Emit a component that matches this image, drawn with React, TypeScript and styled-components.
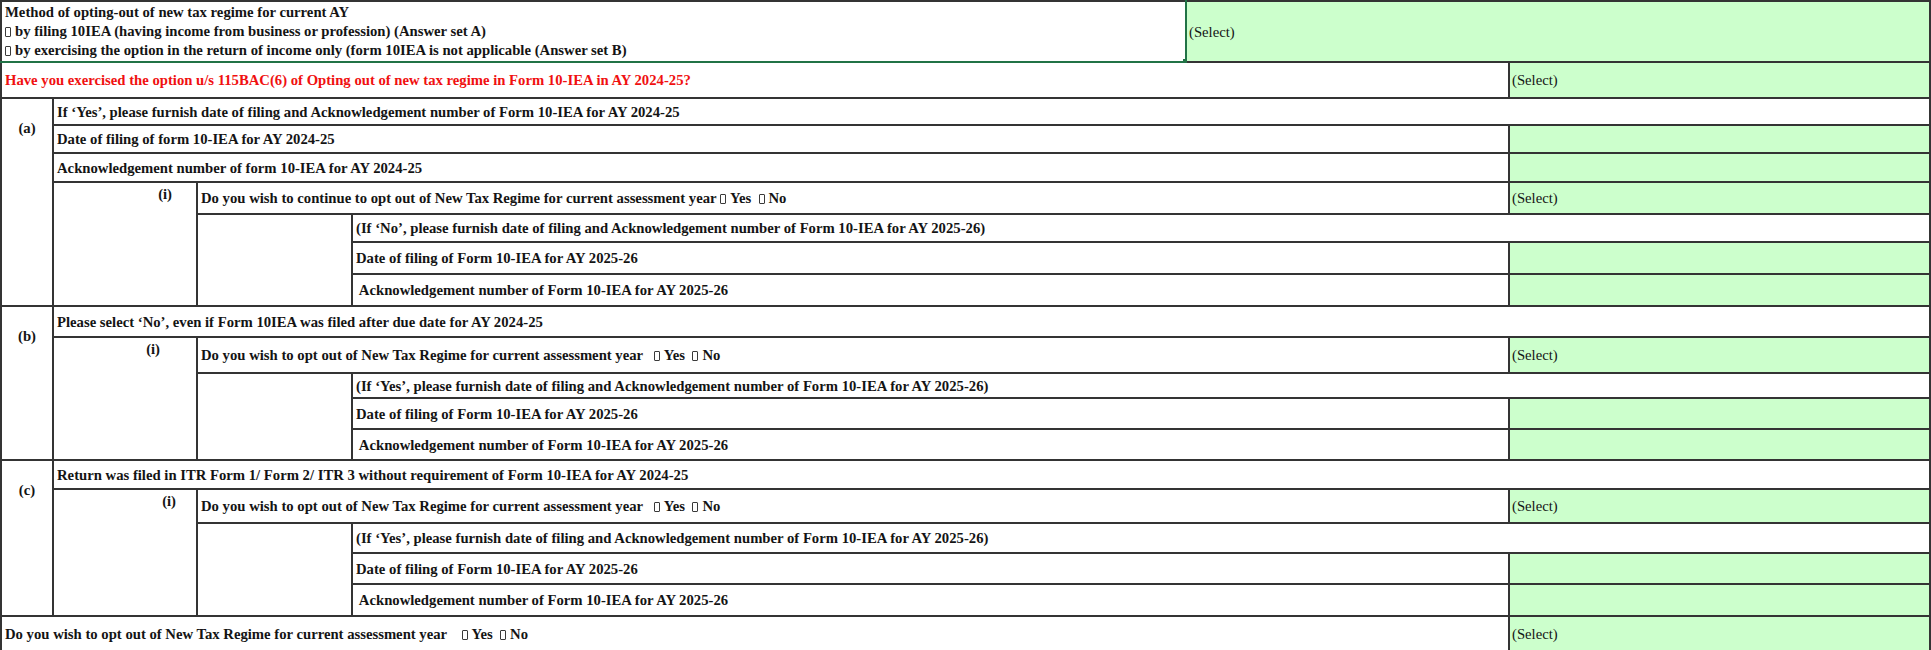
import React from "react";
import styled, { createGlobalStyle } from "styled-components";

const Global = createGlobalStyle`
  html, body { margin: 0; padding: 0; background: #ffffff; }
`;

const Sheet = styled.table`
  width: 1931px;
  border-collapse: collapse;
  table-layout: fixed;
  font-family: "Liberation Serif", "Times New Roman", serif;
  font-size: 14.7px;
  font-weight: bold;
  color: #141414;
  border: 2px solid #1a1a1a;
`;

const Row = styled.tr<{ $h: number }>`
  height: ${(p) => p.$h}px;
`;

const Cell = styled.td<{ $tone?: "red" }>`
  border: 2px solid #343434;
  padding: 0 3px;
  vertical-align: middle;
  white-space: pre;
  overflow: hidden;
  line-height: 16px;
  background: #ffffff;
  color: ${(p) => (p.$tone === "red" ? "#f01010" : "#141414")};
`;

const Select = styled(Cell)`
  background: #ccffcc;
  font-weight: normal;
  padding-left: 2px;
`;

const SelectedCell = styled(Cell)`
  position: relative;
  vertical-align: middle;
  line-height: 19px;
  border-right: 2px solid #217346;
  border-bottom: 2px solid #217346;
`;

const FillHandle = styled.span`
  position: absolute;
  right: -5px;
  bottom: -5px;
  width: 6px;
  height: 6px;
  background: #217346;
  border: 1px solid #ffffff;
  z-index: 2;
`;

const SectionLabel = styled(Cell)`
  vertical-align: top;
  text-align: center;
  padding: 21px 0 0;
`;

const ItemLabel = styled(Cell)<{ $pad: number }>`
  vertical-align: top;
  text-align: right;
  padding: 3px ${(p) => p.$pad}px 0 0;
`;

const Blank = styled(Cell)``;

const Box = styled.span`
  display: inline-block;
  width: 4px;
  height: 8px;
  border: 1px solid #3a3a3a;
  border-radius: 1px;
  vertical-align: -1px;
  margin-right: 4px;
`;

const Line = styled.div``;

const YesNo: React.FC<{ lead: string }> = ({ lead }) => (
  <>
    {lead}
    <Box />
    {"Yes  "}
    <Box />
    {"No"}
  </>
);

type BlockProps = {
  question: React.ReactNode;
  note: string;
  pad: number;
  heights: [number, number, number, number];
};

const OptOutBlock: React.FC<BlockProps> = ({ question, note, pad, heights }) => (
  <>
    <Row $h={heights[0]}>
      <ItemLabel rowSpan={4} $pad={pad}>
        (i)
      </ItemLabel>
      <Cell colSpan={3}>{question}</Cell>
      <Select>(Select)</Select>
    </Row>
    <Row $h={heights[1]}>
      <Blank rowSpan={3} />
      <Cell colSpan={3}>{note}</Cell>
    </Row>
    <Row $h={heights[2]}>
      <Cell colSpan={2}>Date of filing of Form 10-IEA for AY 2025-26</Cell>
      <Select />
    </Row>
    <Row $h={heights[3]}>
      <Cell colSpan={2}> Acknowledgement number of Form 10-IEA for AY 2025-26</Cell>
      <Select />
    </Row>
  </>
);

export default function App() {
  return (
    <>
      <Global />
      <Sheet>
        <colgroup>
          <col style={{ width: 52 }} />
          <col style={{ width: 144 }} />
          <col style={{ width: 155 }} />
          <col style={{ width: 834 }} />
          <col style={{ width: 323 }} />
          <col />
        </colgroup>
        <tbody>
          <Row $h={61}>
            <SelectedCell colSpan={4}>
              <Line>Method of opting-out of new tax regime for current AY</Line>
              <Line>
                <Box />
                by filing 10IEA (having income from business or profession) (Answer set A)
              </Line>
              <Line>
                <Box />
                by exercising the option in the return of income only (form 10IEA is not applicable (Answer set B)
              </Line>
              <FillHandle />
            </SelectedCell>
            <Select colSpan={2}>(Select)</Select>
          </Row>
          <Row $h={36}>
            <Cell colSpan={5} $tone="red">
              Have you exercised the option u/s 115BAC(6) of Opting out of new tax regime in Form 10-IEA in AY 2024-25?
            </Cell>
            <Select>(Select)</Select>
          </Row>

          <Row $h={27}>
            <SectionLabel rowSpan={7}>(a)</SectionLabel>
            <Cell colSpan={5}>
              If ‘Yes’, please furnish date of filing and Acknowledgement number of Form 10-IEA for AY 2024-25
            </Cell>
          </Row>
          <Row $h={28}>
            <Cell colSpan={4}>Date of filing of form 10-IEA for AY 2024-25</Cell>
            <Select />
          </Row>
          <Row $h={29}>
            <Cell colSpan={4}>Acknowledgement number of form 10-IEA for AY 2024-25</Cell>
            <Select />
          </Row>
          <OptOutBlock
            pad={24}
            heights={[32, 28, 32, 32]}
            question={<YesNo lead="Do you wish to continue to opt out of New Tax Regime for current assessment year " />}
            note="(If ‘No’, please furnish date of filing and Acknowledgement number of Form 10-IEA for AY 2025-26)"
          />

          <Row $h={31}>
            <SectionLabel rowSpan={5}>(b)</SectionLabel>
            <Cell colSpan={5}>Please select ‘No’, even if Form 10IEA was filed after due date for AY 2024-25</Cell>
          </Row>
          <OptOutBlock
            pad={36}
            heights={[36, 25, 31, 31]}
            question={<YesNo lead="Do you wish to opt out of New Tax Regime for current assessment year   " />}
            note="(If ‘Yes’, please furnish date of filing and Acknowledgement number of Form 10-IEA for AY 2025-26)"
          />

          <Row $h={29}>
            <SectionLabel rowSpan={5}>(c)</SectionLabel>
            <Cell colSpan={5}>
              Return was filed in ITR Form 1/ Form 2/ ITR 3 without requirement of Form 10-IEA for AY 2024-25
            </Cell>
          </Row>
          <OptOutBlock
            pad={20}
            heights={[34, 30, 31, 32]}
            question={<YesNo lead="Do you wish to opt out of New Tax Regime for current assessment year   " />}
            note="(If ‘Yes’, please furnish date of filing and Acknowledgement number of Form 10-IEA for AY 2025-26)"
          />

          <Row $h={35}>
            <Cell colSpan={5}>
              <YesNo lead="Do you wish to opt out of New Tax Regime for current assessment year    " />
            </Cell>
            <Select>(Select)</Select>
          </Row>
        </tbody>
      </Sheet>
    </>
  );
}
